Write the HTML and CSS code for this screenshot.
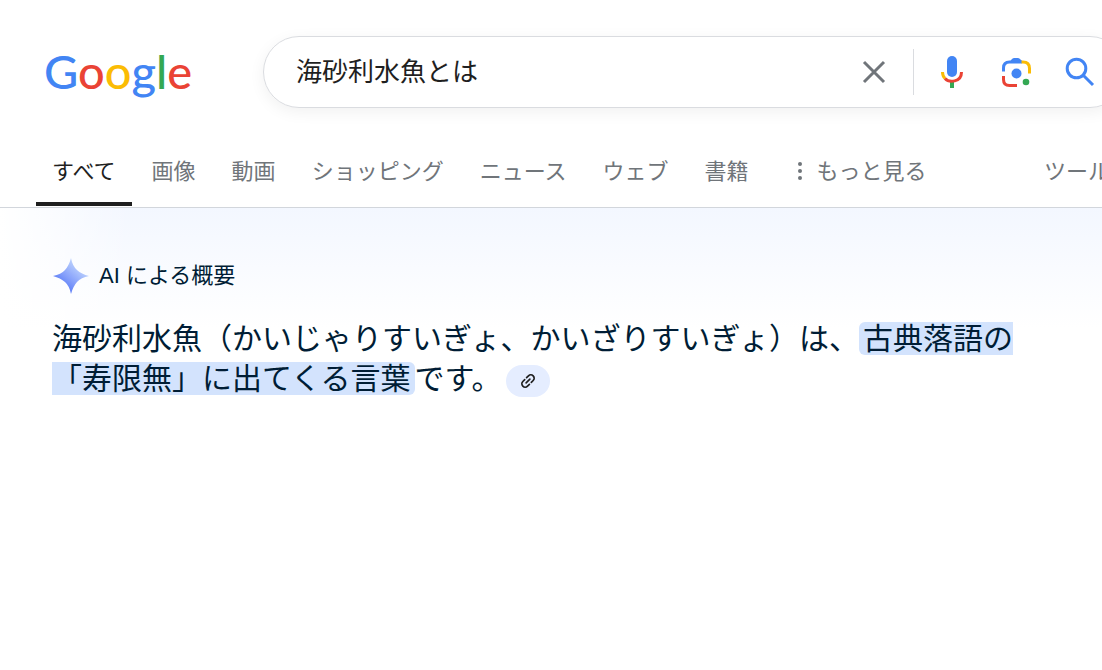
FILE: index.html
```
<!DOCTYPE html>
<html lang="ja">
<head>
  <meta charset="utf-8">
  <title>海砂利水魚とは - Google 検索</title>
  <meta name="viewport" content="width=device-width, initial-scale=1">
  <link rel="stylesheet" href="styles.css">
</head>
<body>
<header class="header">
  <a class="logo" href="#"><span class="blue">G</span><span class="red">o</span><span class="yellow">o</span><span class="blue">g</span><span class="green">l</span><span class="red">e</span></a>
  <form class="search-box">
    <input class="search-input" type="text" value="海砂利水魚とは" aria-label="検索">
    <button class="icon-btn clear-btn" type="button" aria-label="クリア">
      <svg width="24" height="24" viewBox="0 0 24 24" fill="none" stroke="#70757a" stroke-width="3"><path d="M2 2l20 20M22 2L2 22"/></svg>
    </button>
    <span class="divider"></span>
    <button class="icon-btn" type="button" aria-label="音声で検索">
      <svg width="24" height="34" viewBox="0 0 24 34" fill="none" stroke-width="3">
        <rect x="7" y="1" width="10" height="21" rx="5" fill="#4285f4"/>
        <path d="M12 26v7" stroke="#34a853" stroke-width="4"/>
        <path d="M2.500 17c0 3 1 5 2.500 6.500" stroke="#fbbc04"/>
        <path d="M5 23.500c4 4.500 16.500 4 16.500-6.500" stroke="#ea4335"/>
      </svg>
    </button>
    <button class="icon-btn" type="button" aria-label="画像で検索">
      <svg width="32" height="32" viewBox="0 0 32 32" fill="none" stroke-width="3">
        <path d="M3.500 15.500V12q0-6 6-6H22" stroke="#4285f4"/>
        <path d="M9 7l2.500-3.500Q12.500 2 14 2h4q1.500 0 2.500 1.500L24 7z" fill="#4285f4"/>
        <path d="M21.500 6H23q6.500 0 6.500 6.500v5" stroke="#fbbc04"/>
        <path d="M3.500 20v3.500q0 6 6 6H17" stroke="#ea4335"/>
        <circle cx="16.500" cy="17.500" r="5" fill="#4285f4"/>
        <circle cx="26" cy="26" r="3.300" fill="#34a853"/>
      </svg>
    </button>
    <button class="icon-btn" type="submit" aria-label="Google 検索">
      <svg width="30" height="30" viewBox="0 0 30 30" fill="none" stroke="#4285f4" stroke-width="3"><circle cx="11.500" cy="11.500" r="9.300"/><path d="M18 18l10 10"/></svg>
    </button>
  </form>
</header>

<nav class="tabs">
  <a class="tab active" href="#">すべて</a>
  <a class="tab" href="#">画像</a>
  <a class="tab" href="#">動画</a>
  <a class="tab" href="#">ショッピング</a>
  <a class="tab" href="#">ニュース</a>
  <a class="tab" href="#">ウェブ</a>
  <a class="tab" href="#">書籍</a>
  <button class="tab more" type="button">
    <svg width="6" height="20" viewBox="0 0 6 20" fill="#70757a"><circle cx="3" cy="3" r="2"/><circle cx="3" cy="10" r="2"/><circle cx="3" cy="17" r="2"/></svg>
    もっと見る
  </button>
  <button class="tab tools" type="button">ツール</button>
</nav>

<main class="overview">
  <h1 class="overview-title">
    <svg width="38" height="38" viewBox="0 0 38 38">
      <defs>
        <linearGradient id="spark" x1="0.200" y1="0.900" x2="0.800" y2="0.200">
          <stop offset="0" stop-color="#4b70f5"/>
          <stop offset="0.450" stop-color="#86a0fb"/>
          <stop offset="1" stop-color="#c3d8fd"/>
        </linearGradient>
      </defs>
      <path fill="url(#spark)" d="M19 1Q20.500 9 25 13T37 19q-8 1.500-12 6T19 37q-1.500-8-6-12T1 19q8-1.500 12-6T19 1z"/>
    </svg>
    AI による概要
  </h1>
  <p class="summary">海砂利水魚（かいじゃりすいぎょ、かいざりすいぎょ）は、<mark>古典落語の<br>「寿限無」に出てくる言葉</mark>です。<button class="source-btn" type="button" aria-label="関連リンクを表示">
    <svg width="16" height="16" viewBox="0 0 24 24" fill="none" stroke="#1f1f1f" stroke-width="2.500" stroke-linecap="round"><g transform="rotate(-45 12 12)"><path d="M10 7H6a5 5 0 0 0 0 10h4M14 7h4a5 5 0 0 1 0 10h-4M8 12h8"/></g></svg>
  </button></p>
</main>
</body>
</html>
```

FILE: styles.css
```
* {
  box-sizing: border-box;
}

body {
  margin: 0;
  background: #fff;
  color: #1f1f1f;
  font-family: "Liberation Sans", "Noto Sans CJK JP", sans-serif;
  overflow-x: hidden;
}

button {
  border: none;
  background: none;
  font-family: inherit;
  cursor: pointer;
}

a {
  text-decoration: none;
}

.header {
  display: flex;
  align-items: center;
  gap: 72px;
  margin-right: -24px;
  padding: 36px 0 0 44px;
}

.logo {
  width: 147px;
  padding-bottom: 2px;
  font-family: Lato, sans-serif;
  font-size: 47px;
  font-weight: 500;
  line-height: 70px;
}

.blue {
  color: #4285f4;
}

.red {
  color: #ea4335;
}

.yellow {
  color: #fbbc04;
}

.green {
  color: #34a853;
}

.search-box {
  display: flex;
  flex: 1;
  align-items: center;
  height: 72px;
  padding: 0 13px 0 32px;
  border: 1px solid #dadce0;
  border-radius: 36px;
  box-shadow: 0 4px 16px rgba(23, 23, 23, 0.06);
}

.search-input {
  flex: 1;
  min-width: 0;
  height: 48px;
  padding: 0 0 6px;
  border: none;
  outline: none;
  background: none;
  color: #1f1f1f;
  font-family: inherit;
  font-size: 26px;
}

.icon-btn {
  display: flex;
  align-items: center;
  justify-content: center;
  width: 64px;
  height: 64px;
  padding: 0;
}

.clear-btn {
  width: 78px;
}

.divider {
  width: 1px;
  height: 46px;
  margin-right: 6px;
  background: #dadce0;
}

.tabs {
  display: flex;
  height: 72px;
  margin-top: 28px;
  padding-left: 36px;
  border-bottom: 1px solid #d2d6dc;
  white-space: nowrap;
}

.tab {
  height: 70px;
  padding: 0 18px;
  border-bottom: 4px solid transparent;
  color: #70757a;
  font-size: 22px;
  line-height: 71px;
}

.tab.active {
  margin-right: 2px;
  padding: 0 16px;
  border-bottom-color: #1f1f1f;
  color: #1f1f1f;
}

.more {
  display: flex;
  align-items: center;
  gap: 14px;
  margin-left: 12px;
  border-bottom: none;
}

.tools {
  margin-right: -26px;
  margin-left: auto;
}

.overview {
  padding: 49px 52px 0;
  background:
    linear-gradient(to right, #fff, rgba(255, 255, 255, 0) 130px),
    linear-gradient(#f3f7ff, #fff 120px);
  color: #001d35;
}

.overview-title {
  display: flex;
  align-items: center;
  gap: 9px;
  margin: 0;
  font-size: 22px;
  font-weight: 400;
  line-height: 38px;
}

.summary {
  margin: 24px 0 0;
  font-size: 30px;
  line-height: 40px;
}

.summary mark {
  padding: 0 4px;
  border-radius: 6px;
  background: #d3e3fd;
  color: inherit;
}

.source-btn {
  display: inline-flex;
  align-items: center;
  justify-content: center;
  width: 44px;
  height: 32px;
  margin-left: 4px;
  padding: 0;
  border-radius: 16px;
  background: #e5edff;
  vertical-align: middle;
}
```
